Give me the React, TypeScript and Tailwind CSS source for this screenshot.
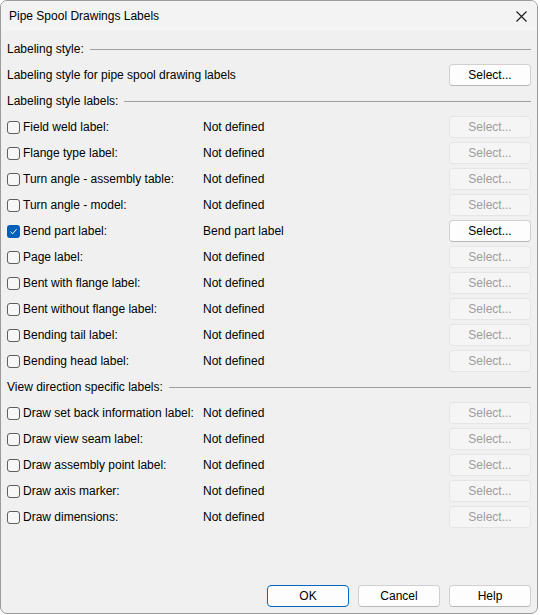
import React from "react";

type Row = { label: string; value: string; checked?: boolean };

const styleRows: Row[] = [
  { label: "Field weld label:", value: "Not defined" },
  { label: "Flange type label:", value: "Not defined" },
  { label: "Turn angle - assembly table:", value: "Not defined" },
  { label: "Turn angle - model:", value: "Not defined" },
  { label: "Bend part label:", value: "Bend part label", checked: true },
  { label: "Page label:", value: "Not defined" },
  { label: "Bent with flange label:", value: "Not defined" },
  { label: "Bent without flange label:", value: "Not defined" },
  { label: "Bending tail label:", value: "Not defined" },
  { label: "Bending head label:", value: "Not defined" },
];

const viewRows: Row[] = [
  { label: "Draw set back information label:", value: "Not defined" },
  { label: "Draw view seam label:", value: "Not defined" },
  { label: "Draw assembly point label:", value: "Not defined" },
  { label: "Draw axis marker:", value: "Not defined" },
  { label: "Draw dimensions:", value: "Not defined" },
];

function Header({ text }: { text: string }) {
  return (
    <div className="flex h-[26px] items-center gap-[6px]">
      <span>{text}</span>
      <div className="h-px flex-1 bg-[#a0a0a0]" />
    </div>
  );
}

function SelectButton({ enabled }: { enabled?: boolean }) {
  return enabled ? (
    <button className="h-[22px] w-[82px] rounded-[4px] border border-[#d0d0d0] border-b-[#b8b8b8] bg-[#fdfdfd] text-black">
      Select...
    </button>
  ) : (
    <button className="h-[22px] w-[82px] rounded-[4px] border border-[#e5e5e5] bg-[#f5f5f5] text-[#9d9d9d]">
      Select...
    </button>
  );
}

function Check({ checked }: { checked?: boolean }) {
  if (checked)
    return (
      <span className="flex h-[13px] w-[13px] items-center justify-center rounded-[3px] bg-[#005fb8]">
        <svg width="9" height="9" viewBox="0 0 9 9">
          <path d="M1.5 4.8 L3.6 6.8 L7.6 2.2" fill="none" stroke="white" strokeWidth="1" />
        </svg>
      </span>
    );
  return <span className="h-[13px] w-[13px] rounded-[3px] border border-[#5e5e5e] bg-[#f7f7f7]" />;
}

function LabelRow({ row }: { row: Row }) {
  return (
    <div className="flex h-[26px] items-center">
      <div className="flex w-[196px] items-center gap-[3px]">
        <Check checked={row.checked} />
        <span>{row.label}</span>
      </div>
      <span className="flex-1">{row.value}</span>
      <SelectButton enabled={row.checked} />
    </div>
  );
}

export default function App() {
  return (
    <div className="h-[615px] w-[540px] bg-white text-[12px] text-black" style={{ fontFamily: '"Liberation Sans", Arial, sans-serif' }}>
      <div className="flex h-[614px] w-[538px] flex-col overflow-hidden rounded-[7px] border border-[#9c9c9c] bg-[#f0f0f0]">
        <div className="flex h-[30px] items-center justify-between bg-[#f3f3f3] pl-[8px] pr-[10px]">
          <span>Pipe Spool Drawings Labels</span>
          <svg width="11" height="11" viewBox="0 0 11 11">
            <path d="M0.5 0.5 L10.5 10.5 M10.5 0.5 L0.5 10.5" stroke="#1a1a1a" strokeWidth="1.1" />
          </svg>
        </div>
        <div className="flex flex-1 flex-col px-[6px] pt-[5px] pb-[6px]">
          <Header text="Labeling style:" />
          <div className="flex h-[26px] items-center justify-between">
            <span>Labeling style for pipe spool drawing labels</span>
            <SelectButton enabled />
          </div>
          <Header text="Labeling style labels:" />
          {styleRows.map((r) => (
            <LabelRow key={r.label} row={r} />
          ))}
          <Header text="View direction specific labels:" />
          {viewRows.map((r) => (
            <LabelRow key={r.label} row={r} />
          ))}
          <div className="mt-auto flex justify-end gap-[9px]">
            <button className="h-[22px] w-[82px] rounded-[4px] border border-[#0067c0] bg-[#fdfdfd]">OK</button>
            <button className="h-[22px] w-[82px] rounded-[4px] border border-[#d0d0d0] border-b-[#b8b8b8] bg-[#fdfdfd]">Cancel</button>
            <button className="h-[22px] w-[82px] rounded-[4px] border border-[#d0d0d0] border-b-[#b8b8b8] bg-[#fdfdfd]">Help</button>
          </div>
        </div>
      </div>
    </div>
  );
}
